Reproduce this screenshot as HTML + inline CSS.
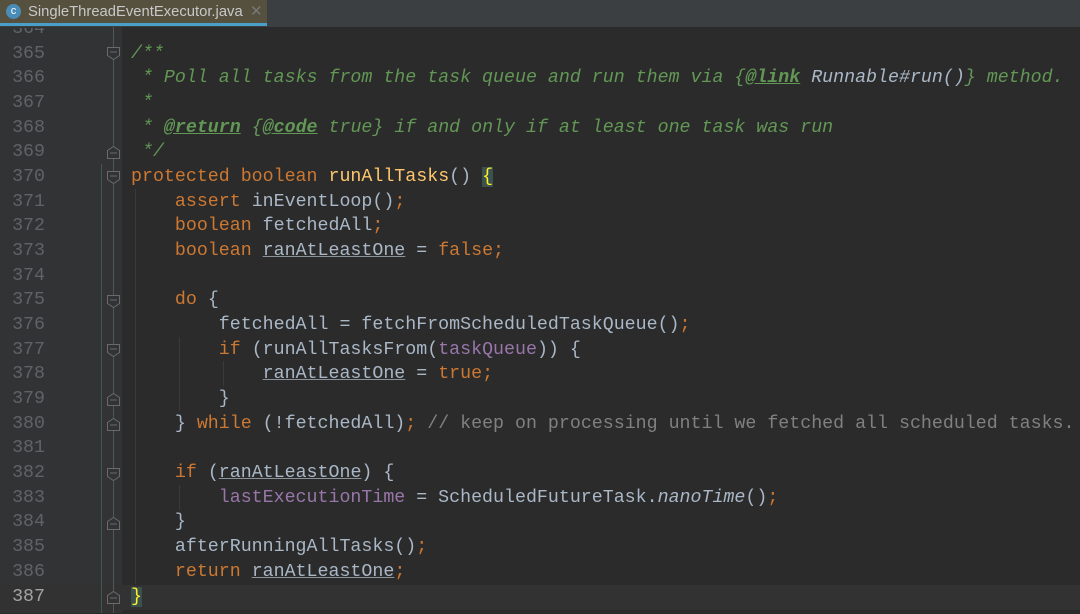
<!DOCTYPE html>
<html><head><meta charset="utf-8"><style>
body{margin:0;width:1080px;height:613px;overflow:hidden;background:#2b2b2b;font-family:"Liberation Mono",monospace;position:relative}
#tabs{position:absolute;left:0;top:0;width:1080px;height:27px;background:#3c3f41}
#tab{position:absolute;left:0;top:0;width:267px;height:23px;background:#56503f;border-bottom:3px solid #4a9fc9;font-family:"Liberation Sans",sans-serif;color:#c8c8c8;font-size:14.8px;line-height:24px}
#tab .ic{position:absolute;left:6px;top:4px;width:15px;height:15px;border-radius:50%;background:#4a8cb8;color:#fff;font-size:11px;line-height:15px;text-align:center}
#tab .t{position:absolute;left:28px;top:0}
#tab .x{position:absolute;left:250px;top:0;color:#777}
#gutter{position:absolute;left:0;top:27px;width:122px;height:586px;background:#313335}
#code{position:absolute;left:0;top:28px;width:1080px;height:586px;overflow:hidden}
.l{position:absolute;left:0;height:25px;width:1080px;font-size:18.3px;line-height:25px;white-space:pre;color:#a9b7c6}
.n{position:absolute;left:0;width:45px;text-align:right;color:#606366}
.c{position:absolute;left:131px}
.k{color:#cc7832}.d{color:#629755;font-style:italic}.dt{color:#629755;font-style:italic;font-weight:bold;text-decoration:underline}
.f{color:#9876aa}.m{color:#ffc66d}.g{color:#808080}.u{text-decoration:underline;text-decoration-color:#8a939c}.i{font-style:italic}
.br{background:#3b514d;color:#ffef28}
</style></head><body>
<div id="tabs"><div id="tab"><span class="ic">c</span><span class="t">SingleThreadEventExecutor.java</span><span class="x">✕</span></div></div>
<div id="gutter"></div>
<div style="position:absolute;left:0;top:585px;width:1080px;height:25px;background:#323232"></div>
<div style="position:absolute;left:113px;top:27px;width:1px;height:586px;background:#555"></div>
<div style="position:absolute;left:101px;top:164px;width:1px;height:449px;background:#3f5a4c"></div>
<div style="position:absolute;left:135px;top:189px;width:1px;height:395px;background:#3a3a3a"></div>
<div style="position:absolute;left:179px;top:337px;width:1px;height:74px;background:#3a3a3a"></div>
<div style="position:absolute;left:179px;top:485px;width:1px;height:25px;background:#3a3a3a"></div>
<div style="position:absolute;left:223px;top:361px;width:1px;height:25px;background:#3a3a3a"></div>
<div id="code">
<div class="l" style="top:-11px"><span class="n">364</span></div>
<div class="l" style="top:14px"><span class="n">365</span><span class="c d">/**</span></div>
<div class="l" style="top:38px"><span class="n">366</span><span class="c d"> * Poll all tasks from the task queue and run them via {<span class="dt">@link</span> <span style="color:#a9b7c6;font-style:italic">Runnable#run()</span>} method.</span></div>
<div class="l" style="top:63px"><span class="n">367</span><span class="c d"> *</span></div>
<div class="l" style="top:88px"><span class="n">368</span><span class="c d"> * <span class="dt">@return</span> {<span class="dt">@code</span> true} if and only if at least one task was run</span></div>
<div class="l" style="top:112px"><span class="n">369</span><span class="c d"> */</span></div>
<div class="l" style="top:137px"><span class="n">370</span><span class="c"><span class="k">protected boolean </span><span class="m">runAllTasks</span>() <span class="br">{</span></span></div>
<div class="l" style="top:162px"><span class="n">371</span><span class="c">    <span class="k">assert </span>inEventLoop()<span class="k">;</span></span></div>
<div class="l" style="top:186px"><span class="n">372</span><span class="c">    <span class="k">boolean </span>fetchedAll<span class="k">;</span></span></div>
<div class="l" style="top:211px"><span class="n">373</span><span class="c">    <span class="k">boolean </span><span class="u">ranAtLeastOne</span> = <span class="k">false;</span></span></div>
<div class="l" style="top:236px"><span class="n">374</span></div>
<div class="l" style="top:260px"><span class="n">375</span><span class="c">    <span class="k">do </span>{</span></div>
<div class="l" style="top:285px"><span class="n">376</span><span class="c">        fetchedAll = fetchFromScheduledTaskQueue()<span class="k">;</span></span></div>
<div class="l" style="top:310px"><span class="n">377</span><span class="c">        <span class="k">if </span>(runAllTasksFrom(<span class="f">taskQueue</span>)) {</span></div>
<div class="l" style="top:334px"><span class="n">378</span><span class="c">            <span class="u">ranAtLeastOne</span> = <span class="k">true;</span></span></div>
<div class="l" style="top:359px"><span class="n">379</span><span class="c">        }</span></div>
<div class="l" style="top:384px"><span class="n">380</span><span class="c">    } <span class="k">while </span>(!fetchedAll)<span class="k">; </span><span class="g">// keep on processing until we fetched all scheduled tasks.</span></span></div>
<div class="l" style="top:408px"><span class="n">381</span></div>
<div class="l" style="top:433px"><span class="n">382</span><span class="c">    <span class="k">if </span>(<span class="u">ranAtLeastOne</span>) {</span></div>
<div class="l" style="top:458px"><span class="n">383</span><span class="c">        <span class="f">lastExecutionTime</span> = ScheduledFutureTask.<span class="i">nanoTime</span>()<span class="k">;</span></span></div>
<div class="l" style="top:482px"><span class="n">384</span><span class="c">    }</span></div>
<div class="l" style="top:507px"><span class="n">385</span><span class="c">    afterRunningAllTasks()<span class="k">;</span></span></div>
<div class="l" style="top:532px"><span class="n">386</span><span class="c">    <span class="k">return </span><span class="u">ranAtLeastOne</span><span class="k">;</span></span></div>
<div class="l" style="top:557px"><span class="n" style="color:#a4a3a3">387</span><span class="c"><span class="br">}</span></span></div>
</div>
<svg style="position:absolute;left:0;top:1px" width="1080" height="613" fill="#313335" stroke="#6a6a6a" stroke-width="1">
<g id="fd"><path d="M107.5 46.5h12v8l-6 4l-6-4z"/><path d="M110 51h7"/></g>
<use href="#fd" y="124"/><use href="#fd" y="248"/><use href="#fd" y="297"/><use href="#fd" y="421"/>
<g id="fu"><path d="M107.5 157.5h12v-8l-6-4l-6 4z"/><path d="M110 152h7"/></g>
<use href="#fu" y="247"/><use href="#fu" y="272"/><use href="#fu" y="371"/><use href="#fu" y="445"/>
</svg>
</body></html>
